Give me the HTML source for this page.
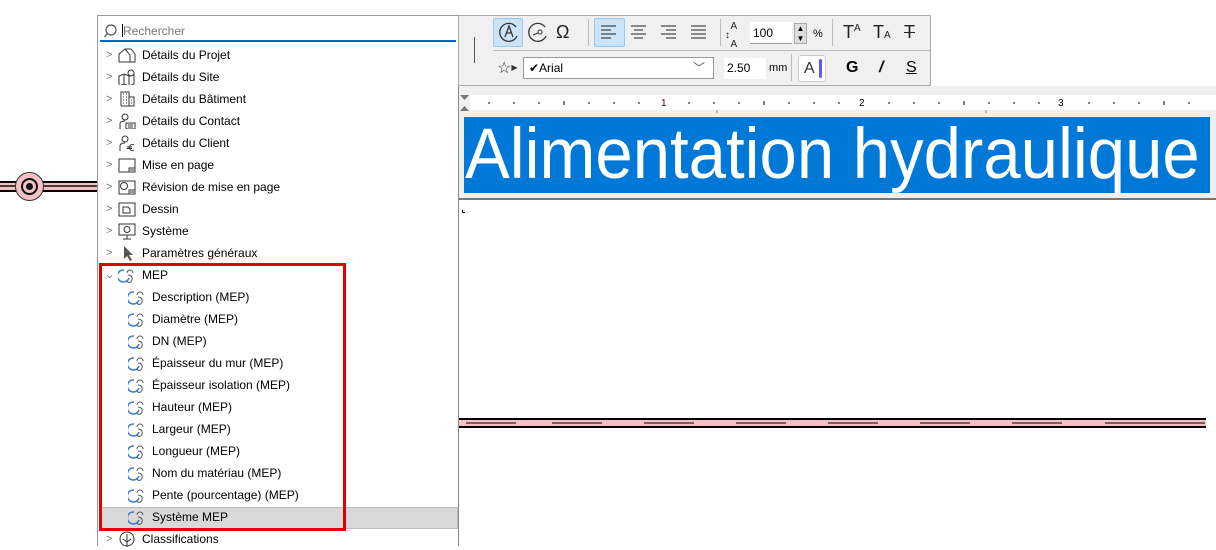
<!DOCTYPE html>
<html><head><meta charset="utf-8"><style>
*{margin:0;padding:0;box-sizing:border-box}
body{width:1216px;height:546px;background:#fff;position:relative;overflow:hidden;font-family:"Liberation Sans",sans-serif;font-size:12px;color:#000}
.a{position:absolute}
.row{position:absolute;left:98px;height:22px;width:360px;line-height:22px;white-space:nowrap}
.chev{position:absolute;left:8px;top:0;color:#777;font-size:11px}
.ic{position:absolute;top:3px}
.tx{position:absolute}
.tb{position:absolute;color:#222;font-size:14px;text-align:center}
</style></head><body>
<div class="a" style="left:0;top:181px;width:98px;height:11px;background:#f4c2c2;border-top:2px solid #000;border-bottom:2px solid #000"></div>
<div class="a" style="left:0;top:185px;width:98px;height:2px;background:#000;opacity:.7"></div>
<div class="a" style="left:15px;top:172px;width:29px;height:29px;border-radius:50%;background:#f4c2c2;border:1px solid #333"></div>
<div class="a" style="left:21px;top:178px;width:17px;height:17px;border-radius:50%;border:2px solid #111"></div>
<div class="a" style="left:26px;top:183px;width:7px;height:7px;border-radius:50%;background:#111"></div>

<div class="a" style="left:97px;top:15px;width:362px;height:531px;background:#fff;border:1px solid #999;border-bottom:none"></div>
<div class="a" style="left:100px;top:19px;width:356px;height:23px;background:#fff;border-bottom:2px solid #0067c0"></div>
<svg class="a" style="left:104px;top:23px" width="16" height="16"><circle cx="7" cy="7" r="5" fill="none" stroke="#555" stroke-width="1.2"/><line x1="3" y1="11" x2="0.5" y2="14" stroke="#555" stroke-width="1.3"/></svg>
<div class="a" style="left:122px;top:24px;width:1px;height:13px;background:#000"></div>
<div class="a" style="left:123px;top:24px;color:#777;font-size:12px">Rechercher</div>

<div class="row" style="top:44px"><span class="chev">&gt;</span><svg class="ic" style="left:20px" width="18" height="16"><path d="M1 15V7L7 2h6l4 5v8zM7 2l5 6v7M1 7" fill="none" stroke="#333"/></svg><span class="tx" style="left:44px">Détails du Projet</span></div>
<div class="row" style="top:66px"><span class="chev">&gt;</span><svg class="ic" style="left:20px" width="18" height="16"><path d="M1 7l5-2 5 2 5-2v10l-5 2-5-2-5 2zM6 5v10M11 7v10" fill="none" stroke="#333"/><circle cx="13" cy="4" r="3" fill="#fff" stroke="#333"/></svg><span class="tx" style="left:44px">Détails du Site</span></div>
<div class="row" style="top:88px"><span class="chev">&gt;</span><svg class="ic" style="left:22px" width="16" height="16"><path d="M1 15V1h8v14M9 6h5v9H1" fill="none" stroke="#333"/><path d="M3 3h1M6 3h1M3 6h1M6 6h1M3 9h1M6 9h1M3 12h1M6 12h1M11 9h1M11 12h1" stroke="#333"/></svg><span class="tx" style="left:44px">Détails du Bâtiment</span></div>
<div class="row" style="top:110px"><span class="chev">&gt;</span><svg class="ic" style="left:20px" width="18" height="16"><circle cx="7" cy="4" r="3" fill="none" stroke="#333"/><path d="M2 16v-5c0-2 2-3 5-3M8 10h9v6H8zM10 12h5M10 14h5" fill="none" stroke="#333"/></svg><span class="tx" style="left:44px">Détails du Contact</span></div>
<div class="row" style="top:132px"><span class="chev">&gt;</span><svg class="ic" style="left:20px" width="18" height="16"><circle cx="7" cy="4" r="3" fill="none" stroke="#333"/><path d="M2 16v-5c0-2 2-3 5-3M16 10a3 3 0 1 0 0 5M9 12h5M9 13.5h5" fill="none" stroke="#333"/></svg><span class="tx" style="left:44px">Détails du Client</span></div>
<div class="row" style="top:154px"><span class="chev">&gt;</span><svg class="ic" style="left:20px" width="18" height="16"><path d="M1 2h16v13H1zM11 15v-4h6M12 13h4" fill="none" stroke="#333"/></svg><span class="tx" style="left:44px">Mise en page</span></div>
<div class="row" style="top:176px"><span class="chev">&gt;</span><svg class="ic" style="left:20px" width="18" height="16"><path d="M1 2h16v13H1zM11 15v-4h6M12 13h4" fill="none" stroke="#333"/><circle cx="6" cy="7" r="3.5" fill="none" stroke="#333"/></svg><span class="tx" style="left:44px">Révision de mise en page</span></div>
<div class="row" style="top:198px"><span class="chev">&gt;</span><svg class="ic" style="left:20px" width="18" height="16"><path d="M1 2h16v13H1zM5 6h5l2 2v4H5z" fill="none" stroke="#333"/></svg><span class="tx" style="left:44px">Dessin</span></div>
<div class="row" style="top:220px"><span class="chev">&gt;</span><svg class="ic" style="left:20px" width="18" height="17"><path d="M1 1h16v11H1zM9 12v4M5 16h8" fill="none" stroke="#333"/><circle cx="9" cy="6.5" r="3" fill="none" stroke="#333"/></svg><span class="tx" style="left:44px">Système</span></div>
<div class="row" style="top:242px"><span class="chev">&gt;</span><svg class="ic" style="left:24px" width="14" height="16"><path d="M2 1v13l3-3 3 5 2-1-3-5h4z" fill="#555"/></svg><span class="tx" style="left:44px">Paramètres généraux</span></div>
<div class="row" style="top:264px"><span class="chev" style="left:7px">&#8964;</span><svg class="ic" style="left:20px" width="18" height="16"><path d="M6 3a6 6 0 1 0 5 8" fill="none" stroke="#3a7bd5" stroke-width="1.5"/><path d="M9 6a3 3 0 1 1 6 0M10 8c3 0 5 2 4 5s-4 3-5 1" fill="none" stroke="#555"/></svg><span class="tx" style="left:44px">MEP</span></div>

<div class="a" style="left:100px;top:507px;width:358px;height:22px;background:#d9d9d9;border:1px solid #bbb"></div>
<div class="row" style="top:286px"><svg class="ic" style="left:30px" width="18" height="16"><path d="M6 3a6 6 0 1 0 5 8" fill="none" stroke="#3a7bd5" stroke-width="1.5"/><path d="M9 6a3 3 0 1 1 6 0M10 8c3 0 5 2 4 5s-4 3-5 1" fill="none" stroke="#555"/></svg><span class="tx" style="left:54px">Description (MEP)</span></div>
<div class="row" style="top:308px"><svg class="ic" style="left:30px" width="18" height="16"><path d="M6 3a6 6 0 1 0 5 8" fill="none" stroke="#3a7bd5" stroke-width="1.5"/><path d="M9 6a3 3 0 1 1 6 0M10 8c3 0 5 2 4 5s-4 3-5 1" fill="none" stroke="#555"/></svg><span class="tx" style="left:54px">Diamètre (MEP)</span></div>
<div class="row" style="top:330px"><svg class="ic" style="left:30px" width="18" height="16"><path d="M6 3a6 6 0 1 0 5 8" fill="none" stroke="#3a7bd5" stroke-width="1.5"/><path d="M9 6a3 3 0 1 1 6 0M10 8c3 0 5 2 4 5s-4 3-5 1" fill="none" stroke="#555"/></svg><span class="tx" style="left:54px">DN (MEP)</span></div>
<div class="row" style="top:352px"><svg class="ic" style="left:30px" width="18" height="16"><path d="M6 3a6 6 0 1 0 5 8" fill="none" stroke="#3a7bd5" stroke-width="1.5"/><path d="M9 6a3 3 0 1 1 6 0M10 8c3 0 5 2 4 5s-4 3-5 1" fill="none" stroke="#555"/></svg><span class="tx" style="left:54px">Épaisseur du mur (MEP)</span></div>
<div class="row" style="top:374px"><svg class="ic" style="left:30px" width="18" height="16"><path d="M6 3a6 6 0 1 0 5 8" fill="none" stroke="#3a7bd5" stroke-width="1.5"/><path d="M9 6a3 3 0 1 1 6 0M10 8c3 0 5 2 4 5s-4 3-5 1" fill="none" stroke="#555"/></svg><span class="tx" style="left:54px">Épaisseur isolation (MEP)</span></div>
<div class="row" style="top:396px"><svg class="ic" style="left:30px" width="18" height="16"><path d="M6 3a6 6 0 1 0 5 8" fill="none" stroke="#3a7bd5" stroke-width="1.5"/><path d="M9 6a3 3 0 1 1 6 0M10 8c3 0 5 2 4 5s-4 3-5 1" fill="none" stroke="#555"/></svg><span class="tx" style="left:54px">Hauteur (MEP)</span></div>
<div class="row" style="top:418px"><svg class="ic" style="left:30px" width="18" height="16"><path d="M6 3a6 6 0 1 0 5 8" fill="none" stroke="#3a7bd5" stroke-width="1.5"/><path d="M9 6a3 3 0 1 1 6 0M10 8c3 0 5 2 4 5s-4 3-5 1" fill="none" stroke="#555"/></svg><span class="tx" style="left:54px">Largeur (MEP)</span></div>
<div class="row" style="top:440px"><svg class="ic" style="left:30px" width="18" height="16"><path d="M6 3a6 6 0 1 0 5 8" fill="none" stroke="#3a7bd5" stroke-width="1.5"/><path d="M9 6a3 3 0 1 1 6 0M10 8c3 0 5 2 4 5s-4 3-5 1" fill="none" stroke="#555"/></svg><span class="tx" style="left:54px">Longueur (MEP)</span></div>
<div class="row" style="top:462px"><svg class="ic" style="left:30px" width="18" height="16"><path d="M6 3a6 6 0 1 0 5 8" fill="none" stroke="#3a7bd5" stroke-width="1.5"/><path d="M9 6a3 3 0 1 1 6 0M10 8c3 0 5 2 4 5s-4 3-5 1" fill="none" stroke="#555"/></svg><span class="tx" style="left:54px">Nom du matériau (MEP)</span></div>
<div class="row" style="top:484px"><svg class="ic" style="left:30px" width="18" height="16"><path d="M6 3a6 6 0 1 0 5 8" fill="none" stroke="#3a7bd5" stroke-width="1.5"/><path d="M9 6a3 3 0 1 1 6 0M10 8c3 0 5 2 4 5s-4 3-5 1" fill="none" stroke="#555"/></svg><span class="tx" style="left:54px">Pente (pourcentage) (MEP)</span></div>
<div class="row" style="top:506px"><svg class="ic" style="left:30px" width="18" height="16"><path d="M6 3a6 6 0 1 0 5 8" fill="none" stroke="#3a7bd5" stroke-width="1.5"/><path d="M9 6a3 3 0 1 1 6 0M10 8c3 0 5 2 4 5s-4 3-5 1" fill="none" stroke="#555"/></svg><span class="tx" style="left:54px">Système MEP</span></div>
<div class="row" style="top:528px"><span class="chev">&gt;</span><svg class="ic" style="left:20px" width="18" height="16"><circle cx="9" cy="8" r="7" fill="none" stroke="#333"/><path d="M9 3v13M5 8l4 3 4-3" fill="none" stroke="#333"/></svg><span class="tx" style="left:44px">Classifications</span></div>
<div class="a" style="left:99px;top:263px;width:247px;height:268px;border:3px solid #e00000"></div>

<div class="a" style="left:458px;top:15px;width:473px;height:71px;background:#f0f0f0;border:1px solid #aaa"></div>
<div class="a" style="left:474px;top:37px;width:1px;height:26px;background:#555"></div>
<div class="a" style="left:493px;top:18px;width:30px;height:29px;background:#cce4f7;border:1px solid #99c9ef;border-radius:2px"></div>
<div class="a" style="left:594px;top:18px;width:31px;height:29px;background:#cce4f7;border:1px solid #99c9ef;border-radius:2px"></div>
<div class="a" style="left:493px;top:50px;width:437px;height:1px;background:#bbb"></div>
<div class="a" style="left:588px;top:19px;width:1px;height:27px;background:#bbb"></div>
<div class="a" style="left:720px;top:19px;width:1px;height:27px;background:#bbb"></div>
<div class="a" style="left:832px;top:19px;width:1px;height:27px;background:#bbb"></div>
<div class="a" style="left:791px;top:54px;width:1px;height:27px;background:#bbb"></div>
<svg class="a" style="left:498px;top:21px" width="22" height="22"><path d="M18 6A9 9 0 1 0 19 15" fill="none" stroke="#333" stroke-width="1.3"/><path d="M7 16l4-11 4 11M8.5 12h5" fill="none" stroke="#333" stroke-width="1.3"/></svg>
<svg class="a" style="left:527px;top:21px" width="22" height="22"><path d="M18 6A9 9 0 1 0 19 15" fill="none" stroke="#333" stroke-width="1.3"/><circle cx="13" cy="11" r="2" fill="none" stroke="#333"/><path d="M6 14l5-2" stroke="#333"/></svg>
<div class="tb" style="left:556px;top:22px;font-size:18px">Ω</div>
<svg class="a" style="left:600px;top:25px" width="18" height="14" stroke="#222"><path d="M1 1h15M1 5h10M1 9h15M1 13h10"/></svg>
<svg class="a" style="left:630px;top:25px" width="18" height="14" stroke="#222"><path d="M1 1h15M4 5h9M1 9h15M4 13h9"/></svg>
<svg class="a" style="left:660px;top:25px" width="18" height="14" stroke="#222"><path d="M1 1h15M6 5h10M1 9h15M6 13h10"/></svg>
<svg class="a" style="left:690px;top:25px" width="18" height="14" stroke="#222"><path d="M1 1h15M1 5h15M1 9h15M1 13h15"/></svg>
<div class="a" style="left:725px;top:22px;font-size:10px;line-height:9px;color:#222">&nbsp;&nbsp;A<br>↕<br>&nbsp;&nbsp;A</div>
<div class="a" style="left:750px;top:22px;width:42px;height:22px;background:#fff;border-bottom:1px solid #999;font-size:12px;line-height:22px;padding-left:3px">100</div>
<div class="a" style="left:794px;top:23px;width:13px;height:21px;background:#ddd;border:1px solid #aaa;font-size:8px;line-height:10px;text-align:center">▲<br>▼</div>
<div class="a" style="left:813px;top:28px;font-size:11px">%</div>
<div class="tb" style="left:843px;top:22px;font-size:18px">T<span style="font-size:10px;vertical-align:7px">A</span></div>
<div class="tb" style="left:873px;top:22px;font-size:18px">T<span style="font-size:10px">A</span></div>
<div class="tb" style="left:904px;top:22px;font-size:18px;text-decoration:line-through">T</div>
<div class="a" style="left:497px;top:58px;font-size:16px;color:#333">☆<span style="font-size:8px;vertical-align:3px">▶</span></div>
<div class="a" style="left:523px;top:57px;width:191px;height:22px;background:#fff;border:1px solid #999;line-height:20px;padding-left:5px">✔Arial<span style="position:absolute;right:8px;color:#555">﹀</span></div>
<div class="a" style="left:724px;top:58px;width:42px;height:21px;background:#fff;line-height:21px;padding-left:3px">2.50</div>
<div class="a" style="left:769px;top:62px;font-size:11px">mm</div>
<div class="a" style="left:798px;top:55px;width:28px;height:27px;background:#fff;border:1px solid #ccc;border-radius:3px;font-size:16px;line-height:25px;padding-left:5px;color:#333">A</div>
<div class="a" style="left:819px;top:59px;width:3px;height:19px;background:#5a5aff;border-radius:2px"></div>
<div class="a" style="left:846px;top:59px;font-size:16px;font-weight:bold">G</div>
<div class="a" style="left:879px;top:59px;font-size:16px;font-style:italic;font-weight:bold">/</div>
<div class="a" style="left:906px;top:59px;font-size:16px;text-decoration:underline">S</div>

<div class="a" style="left:458px;top:86px;width:758px;height:114px;background:#f0f0f0;border-bottom:2px solid #777;border-left:1px solid #888"></div>
<div class="a" style="left:470px;top:95px;width:746px;height:15px;background:#fff"></div>
<svg class="a" style="left:458px;top:94px" width="758" height="20">
<path d="M2 1h9l-4.5 5zM2 17h9l-4.5-5z" fill="#777"/>
<g stroke="#000"><path d="M31 8v2M56 8v2M81 8v2M131 8v2M156 8v2M181 8v2M231 8v2M256 8v2M281 8v2M331 8v2M356 8v2M381 8v2M431 8v2M456 8v2M481 8v2M531 8v2M556 8v2M581 8v2M631 8v2M656 8v2M681 8v2M731 8v2M106 7v4M306 7v4M506 7v4M706 7v4"/></g>
<path d="M259 16v3M528 16v3" stroke="#888"/>
<text x="203" y="12" font-size="10" font-family="Liberation Sans" fill="#303">1</text>
<text x="401" y="12" font-size="10" font-family="Liberation Sans">2</text>
<text x="600" y="12" font-size="10" font-family="Liberation Sans">3</text>
</svg>
<div class="a" style="left:464px;top:117px;width:746px;height:76px;background:#0078d7;overflow:hidden"><div style="color:#fff;font-size:71px;line-height:76px;font-family:'Liberation Sans',Arial,sans-serif;white-space:nowrap;transform:scaleX(0.945);transform-origin:0 0;padding-left:1px">Alimentation hydraulique</div></div>
<div class="a" style="left:458px;top:200px;width:1px;height:346px;background:#888"></div>
<div class="a" style="left:462px;top:210px;width:3px;height:3px;border-left:1px solid #000;border-bottom:1px solid #000"></div>

<div class="a" style="left:459px;top:418px;width:747px;height:10px;background:#f4c2c2;border-top:2px solid #000;border-bottom:2px solid #000"></div>
<svg class="a" style="left:459px;top:422px" width="747" height="2"><path d="M7 1h50M93 1h50M185 1h50M277 1h50M369 1h50M461 1h50M553 1h50M646 1h100" stroke="#000"/></svg>
</body></html>
